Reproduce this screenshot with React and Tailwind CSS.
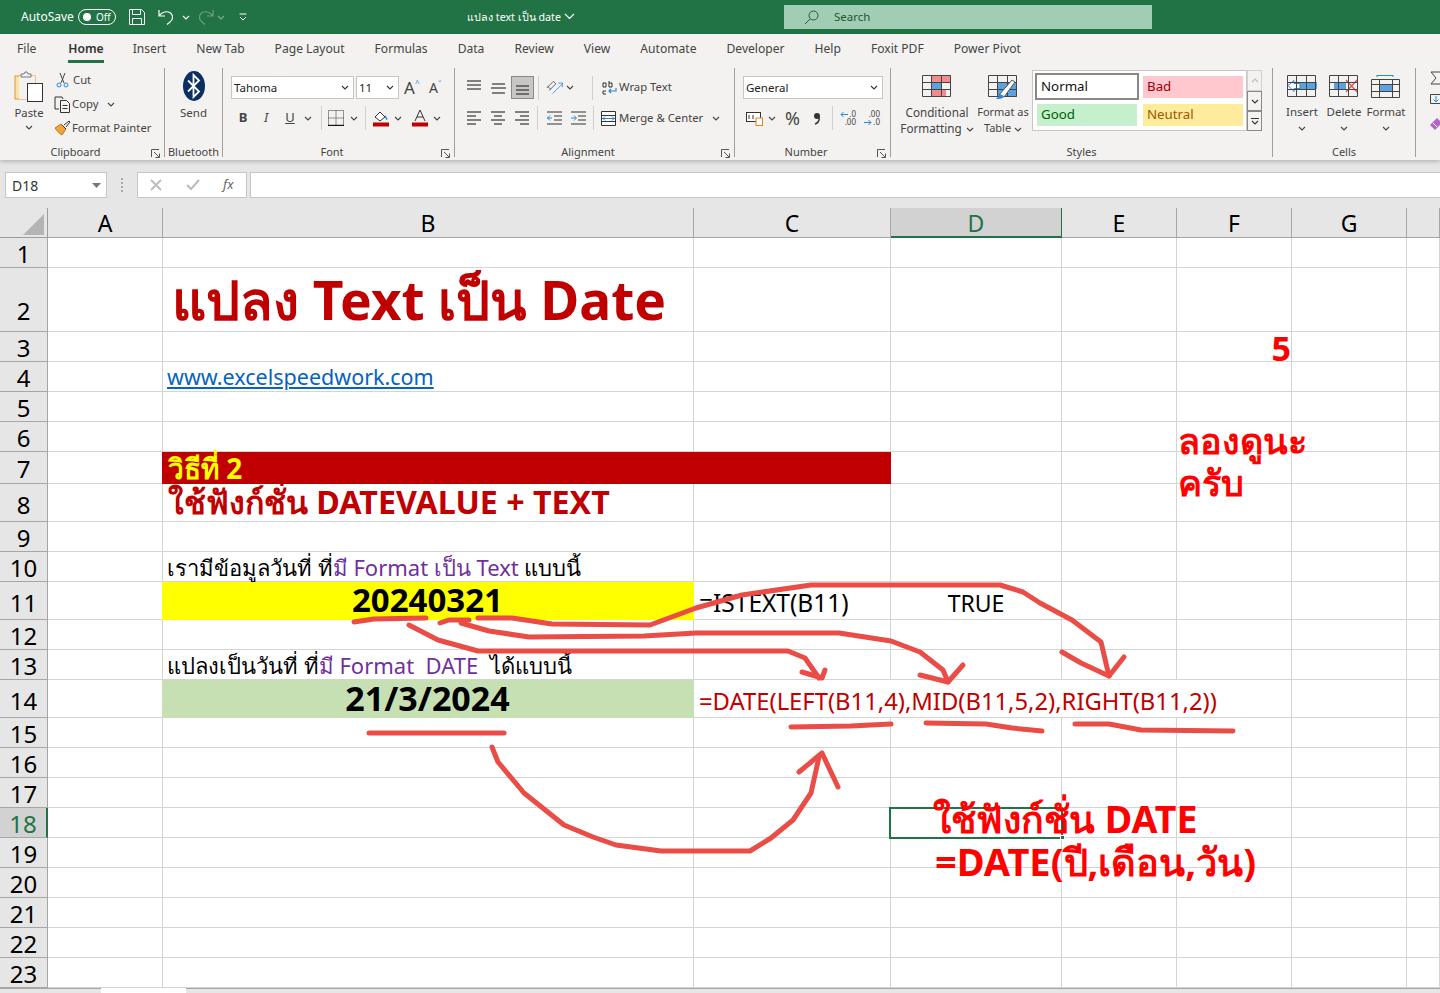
import React from "react";

const Chev = ({ className = "", color = "#444" }) => (
  <svg width="8" height="5" viewBox="0 0 8 5" className={`shrink-0 ${className}`}>
    <path d="M1 1l3 3 3-3" fill="none" stroke={color} strokeWidth="1.1" />
  </svg>
);

const Launcher = () => (
  <svg width="9" height="9" viewBox="0 0 9 9" className="mr-[4px] shrink-0 mt-[2px]">
    <path d="M.5 8V.5H8M3 3l5 5M4.5 8.500h4v-4" fill="none" stroke="#555" strokeWidth="1" />
  </svg>
);

const Sep = ({ className = "" }) => <div className={`w-px h-[24px] bg-[#d2d0ce] ${className}`} />;

// little lines icons for the alignment buttons
const Lines = ({ ys, widths }) => (
  <svg width="15" height="18" viewBox="0 0 15 18">
    {ys.map((y, i) => (
      <line key={i} x1={widths[i][0]} x2={widths[i][1]} y1={y} y2={y} stroke="#333" strokeWidth="1.2" />
    ))}
  </svg>
);

const Group = ({ className, label, launcher, children }) => (
  <div className={`h-full flex flex-col shrink-0 border-r border-[#a19f9d] ${className}`}>
    <div className="flex-1 min-h-0">{children}</div>
    <div className="h-[14px] flex items-center text-[11px] leading-[14px] text-[#444] translate-y-[2px]">
      <div className="flex-1 text-center">{label}</div>
      {launcher && <Launcher />}
    </div>
  </div>
);

const Combo = ({ className, text }) => (
  <div className={`h-[23px] bg-white border border-[#c8c6c4] flex items-center justify-between pl-[2px] pr-[4px] text-[11.500px] text-[#222] ${className}`}>
    <span>{text}</span>
    <Chev color="#333" />
  </div>
);

const TitleBar = () => (
  <div className="h-[34px] bg-[#217346] flex items-center text-white text-[12px] shrink-0">
    <span className="ml-[21px] w-[57px]">AutoSave</span>
    <div className="w-[38px] h-[16px] rounded-full border border-white flex items-center pl-[4px] gap-[5px]">
      <div className="w-[8px] h-[8px] rounded-full bg-white" />
      <span className="text-[10px] leading-none">Off</span>
    </div>
    <svg width="16" height="16" viewBox="0 0 16 16" className="ml-[13px]">
      <path d="M.5.5h12l3 3v12H.5zM3.500.5v5h8v-5M3.500 15.500v-6h9v6" fill="none" stroke="#fff" />
    </svg>
    <svg width="16" height="16" viewBox="0 0 16 16" className="ml-[13px]">
      <path d="M1 1v6h6M1.500 6.500C4 3 9 1.500 12.500 4c3 2.500 2.500 7-.5 9l-3 2.500" fill="none" stroke="#fff" strokeWidth="1.2" />
    </svg>
    <Chev color="#fff" className="ml-[8px]" />
    <svg width="16" height="16" viewBox="0 0 16 16" className="ml-[8px] opacity-40">
      <path d="M15 1v6H9M14.500 6.500C12 3 7 1.500 3.500 4c-3 2.500-2.500 7 .5 9l3 2.500" fill="none" stroke="#cfe3d7" strokeWidth="1.2" />
    </svg>
    <Chev color="#7fae93" className="ml-[3px]" />
    <svg width="8" height="8" viewBox="0 0 8 8" className="ml-[14px]">
      <path d="M.5 1h7M1 4l3 3 3-3" fill="none" stroke="#fff" />
    </svg>
    <div className="ml-[220px] w-[110px] flex items-center gap-[3px] text-[10.700px] whitespace-nowrap">
      <span>แปลง text เป็น date</span>
      <svg width="11" height="7" viewBox="0 0 11 7" className="shrink-0">
        <path d="M1 1l4.500 4.500L10 1" fill="none" stroke="#fff" strokeWidth="1.200" />
      </svg>
    </div>
    <div className="ml-[207px] w-[368px] h-[24px] bg-[#a0cdb3] flex items-center pl-[20px] text-[#1d5a38]">
      <svg width="15" height="15" viewBox="0 0 15 15">
        <circle cx="9.500" cy="5.500" r="4.500" fill="none" stroke="#1d5a38" />
        <path d="M6 9l-5 5" stroke="#1d5a38" />
      </svg>
      <span className="ml-[15px] text-[11.500px]">Search</span>
    </div>
  </div>
);

const tabs = ["Insert", "New Tab", "Page Layout", "Formulas", "Data", "Review", "View", "Automate", "Developer", "Help", "Foxit PDF", "Power Pivot"];

const TabRow = () => (
  <div className="h-[30px] flex items-center gap-[30px] pl-[17px] text-[12.100px] text-[#444] shrink-0 whitespace-nowrap">
    <span className="mr-[2px]">File</span>
    <span className="relative font-semibold text-[#333] -mr-[1px]">
      Home
      <span className="absolute left-0 right-0 -bottom-[5px] h-[3px] bg-[#217346]" />
    </span>
    {tabs.map((t) => (
      <span key={t}>{t}</span>
    ))}
  </div>
);

const Clipboard = () => (
  <Group className="w-[165px]" label="Clipboard" launcher>
    <div className="flex pl-[8px] text-[11.300px] text-[#444]">
      <div className="w-[42px] flex flex-col items-center pt-[3px]">
        <svg width="30" height="32" viewBox="0 0 30 32">
          <rect x="1" y="5" width="20" height="23" fill="#fbe3a6" stroke="#e8912d" />
          <rect x="5" y="5" width="16" height="23" fill="#f3f2f1" />
          <path d="M7 6V3h3l1-2h2l1 2h3v3z" fill="#f3f2f1" stroke="#777" />
          <rect x="13.500" y="12.500" width="15" height="18" fill="#fff" stroke="#333" />
        </svg>
        <span className="mt-[2px] leading-[16px]">Paste</span>
        <Chev className="mt-[4px]" />
      </div>
      <div className="ml-[4px] flex flex-col">
        <div className="h-[24px] flex items-center">
          <svg width="16" height="16" viewBox="0 0 16 16" className="mr-[2px] ml-[1px]">
            <path d="M5 1l4 10M10 1L6 11" stroke="#444" fill="none" />
            <circle cx="4" cy="13" r="2" fill="none" stroke="#2b88d8" />
            <circle cx="11" cy="13" r="2" fill="none" stroke="#2b88d8" />
          </svg>
          Cut
        </div>
        <div className="h-[24px] flex items-center">
          <svg width="17" height="17" viewBox="0 0 17 17" className="mr-[1px]">
            <path d="M5 13H1V1h7l1 2M6.500 4.500h6l3 3v9h-9zM8.500 9.500h5M8.500 12.500h5" fill="none" stroke="#333" />
          </svg>
          Copy
          <Chev className="ml-[9px]" />
        </div>
        <div className="h-[24px] flex items-center whitespace-nowrap">
          <svg width="17" height="16" viewBox="0 0 17 16" className="mr-[1px]">
            <path d="M1 8l6-4 5 5-4 6c-2-1-5-4-7-7z" fill="#f2a33a" stroke="#c8701a" />
            <path d="M8 5l4 4M10 5l5-4 1 1-4 5" fill="none" stroke="#333" />
          </svg>
          Format Painter
        </div>
      </div>
    </div>
  </Group>
);

const BluetoothGroup = () => (
  <Group className="w-[58px]" label="Bluetooth">
    <div className="flex flex-col items-center pt-[3px] text-[11.500px] text-[#444]">
      <svg width="22" height="30" viewBox="0 0 22 30">
        <ellipse cx="11" cy="15" rx="11" ry="15" fill="#0b2e63" />
        <path d="M5 9.500l11 11-5.500 5.500V4l5.500 5.500-11 11" fill="none" stroke="#fff" strokeWidth="1.800" />
      </svg>
      <span className="mt-[4px] leading-[16px]">Send</span>
    </div>
  </Group>
);

const FontGroup = () => (
  <Group className="w-[232px]" label="Font" launcher>
    <div className="pl-[8px] pt-[8px]">
      <div className="flex items-center">
        <Combo className="w-[123px]" text="Tahoma" />
        <Combo className="w-[43px] ml-[2px] text-[#5c2d91]" text="11" />
        <div className="ml-[5px] w-[18px] flex items-start text-[#444] text-[17px] leading-none">
          A<span className="text-[#2b88d8] text-[8px] leading-none">^</span>
        </div>
        <div className="ml-[7px] w-[18px] flex items-start text-[#444] text-[14px] leading-none">
          A<span className="text-[#2b88d8] text-[8px] leading-none">ˇ</span>
        </div>
      </div>
      <div className="mt-[8px] h-[22px] flex items-center text-[13px] text-[#444]">
        <span className="w-[22px] text-center font-bold ml-[1px]">B</span>
        <span className="w-[24px] text-center italic font-['Liberation_Serif',serif]">I</span>
        <span className="w-[24px] text-center underline">U</span>
        <Chev className="ml-[2px]" />
        <Sep className="ml-[9px]" />
        <svg width="16" height="16" viewBox="0 0 16 16" className="ml-[6px]">
          <path d="M.5.5h15v15H.5zM8 .5v15M.5 8h15" fill="none" stroke="#333" strokeDasharray="1 1" />
          <path d="M0 15.500h16" stroke="#111" strokeWidth="1.400" />
        </svg>
        <Chev className="ml-[6px]" />
        <Sep className="ml-[7px]" />
        <svg width="16" height="18" viewBox="0 0 16 18" className="ml-[7px]">
          <path d="M2 8l5-5 5 5-5 4z" fill="#fff" stroke="#333" />
          <path d="M12 6c2 2 3 4 2 5-1 0-2-2-2-5z" fill="#2b88d8" />
          <rect y="13.500" width="16" height="4" fill="#c00000" />
        </svg>
        <Chev className="ml-[5px]" />
        <svg width="16" height="18" viewBox="0 0 16 18" className="ml-[10px]">
          <path d="M3 12L8 1l5 11M5 8h6" fill="none" stroke="#333" />
          <rect y="13.500" width="16" height="4" fill="#c00000" />
        </svg>
        <Chev className="ml-[5px]" />
      </div>
    </div>
  </Group>
);

const AlignmentGroup = () => (
  <Group className="w-[280px]" label="Alignment" launcher>
    <div className="pl-[12px] pt-[8px] text-[11.300px] text-[#444]">
      <div className="h-[23px] flex items-center">
        <Lines ys={[2, 6, 10]} widths={[[0, 14], [0, 14], [0, 14]]} />
        <div className="ml-[9px]"><Lines ys={[5, 9, 14]} widths={[[1, 14], [0, 15], [1, 14]]} /></div>
        <div className="ml-[5px] w-[23px] h-[23px] bg-[#c8c6c4] border border-[#8a8886] flex items-center justify-center">
          <Lines ys={[7, 11, 15]} widths={[[1, 14], [1, 14], [1, 14]]} />
        </div>
        <Sep className="ml-[4px]" />
        <svg width="18" height="15" viewBox="0 0 22 17" className="ml-[7px]">
          <path d="M8 16l12-12M15 3h5v5" fill="none" stroke="#2b88d8" />
          <path d="M1 9l8-8 3 3-8 8M2 7l4 4" fill="none" stroke="#444" />
        </svg>
        <Chev className="ml-[2px]" />
        <Sep className="ml-[18px]" />
        <svg width="15" height="16" viewBox="0 0 15 16" className="ml-[9px] mr-[2px] shrink-0">
          <path d="M1 3h3v4H1zM7 1v6h3V3H7M1 11h3M1 11v3h3" fill="none" stroke="#333" />
          <path d="M14 8v3H7M9 9l-2 2 2 2" fill="none" stroke="#2b88d8" strokeWidth="1.200" />
        </svg>
        <span>Wrap Text</span>
      </div>
      <div className="mt-[8px] h-[22px] flex items-center">
        <Lines ys={[3, 7, 11, 15]} widths={[[0, 14], [0, 9], [0, 14], [0, 9]]} />
        <div className="ml-[9px]"><Lines ys={[3, 7, 11, 15]} widths={[[0, 14], [3, 11], [0, 14], [3, 11]]} /></div>
        <div className="ml-[9px]"><Lines ys={[3, 7, 11, 15]} widths={[[0, 14], [5, 14], [0, 14], [5, 14]]} /></div>
        <Sep className="ml-[7px]" />
        <svg width="15" height="14" viewBox="0 0 15 14" className="ml-[9px]">
          <path d="M0 1h15M7 5h8M7 9h8M0 13h15" stroke="#333" />
          <path d="M5 7H0M3 4.500L.5 7 3 9.500" fill="none" stroke="#2b88d8" />
        </svg>
        <svg width="15" height="14" viewBox="0 0 15 14" className="ml-[9px]">
          <path d="M0 1h15M7 5h8M7 9h8M0 13h15" stroke="#333" />
          <path d="M0 7h5M3 4.500L5.500 7 3 9.500" fill="none" stroke="#2b88d8" />
        </svg>
        <Sep className="ml-[7px]" />
        <svg width="15" height="15" viewBox="0 0 15 15" className="ml-[7px]">
          <path d="M.5.5h14v14H.5zM.5 4.500h14M.5 10.500h14" fill="#fff" stroke="#333" />
          <path d="M1 7.500h13M4 5.500L2 7.500l2 2M11 5.500l2 2-2 2" fill="none" stroke="#2b88d8" />
        </svg>
        <span className="ml-[3px]">Merge &amp; Center</span>
        <Chev className="ml-[9px]" />
      </div>
    </div>
  </Group>
);

const ArrowL = () => (
  <svg width="8" height="7" viewBox="0 0 8 7">
    <path d="M8 3.500H1M3.500 1L1 3.500 3.500 6" fill="none" stroke="#2b88d8" />
  </svg>
);

const ArrowR = () => (
  <svg width="8" height="7" viewBox="0 0 8 7">
    <path d="M0 3.500h7M4.500 1L7 3.500 4.500 6" fill="none" stroke="#2b88d8" />
  </svg>
);

const NumberGroup = () => (
  <Group className="w-[156px]" label="Number" launcher>
    <div className="pl-[8px] pt-[8px] text-[#444]">
      <Combo className="w-[140px]" text="General" />
      <div className="mt-[8px] h-[22px] flex items-center">
        <svg width="17" height="15" viewBox="0 0 17 15" className="ml-[3px]">
          <rect x=".5" y="1.500" width="14" height="9" fill="#fff" stroke="#333" />
          <rect x="10" y="7" width="6.500" height="7.500" fill="#fff" stroke="#e8821a" />
          <path d="M3 4v4M7 4v4" stroke="#333" />
        </svg>
        <Chev className="ml-[5px]" />
        <span className="ml-[9px] w-[16px] text-[18px] leading-none">%</span>
        <svg width="8" height="13" viewBox="0 0 8 13" className="ml-[12px]">
          <circle cx="4" cy="4" r="3" fill="#333" />
          <path d="M6 5c1 3-1 6-4 7" fill="none" stroke="#333" strokeWidth="1.500" />
        </svg>
        <Sep className="ml-[11px]" />
        <div className="ml-[7px] w-[16px] flex flex-col text-[8px] leading-[8px]">
          <div className="flex items-center justify-between"><ArrowL /><span>.0</span></div>
          <div className="text-right">.00</div>
        </div>
        <div className="ml-[8px] w-[16px] flex flex-col text-[8px] leading-[8px]">
          <div className="text-right">.00</div>
          <div className="flex items-center justify-between"><ArrowR /><span>.0</span></div>
        </div>
      </div>
    </div>
  </Group>
);

const SmallGrid = ({ children }) => (
  <svg width="30" height="24" viewBox="0 0 30 24">
    {children}
    <path d="M.5.500h28v21H.5zM.5 7.500h28M.5 14.500h28M9.500.500v21M19.500.500v21" fill="none" stroke="#444" />
  </svg>
);

const styleCell = "w-[100px] h-[22px] flex items-center pl-[4px] pb-[2px] text-[13.300px]";

const StylesGroup = () => (
  <Group className="w-[382px]" label="Styles">
    <div className="flex pl-[8px] text-[11.700px] leading-[16px] text-[#444]">
      <div className="w-[76px] flex flex-col items-center pt-[7px]">
        <SmallGrid>
          <rect x="10" y="0" width="19" height="7" fill="#f28b8d" />
          <rect x="10" y="7" width="9" height="7" fill="#5ba3e0" />
          <rect x="10" y="14" width="14" height="7" fill="#f28b8d" />
        </SmallGrid>
        <span className="mt-[5px]">Conditional</span>
        <span className="whitespace-nowrap">Formatting <Chev className="inline ml-[1px]" /></span>
      </div>
      <div className="w-[58px] -ml-[1px] flex flex-col items-center pt-[7px]">
        <div className="relative">
          <SmallGrid>
            <rect x="10" y="7" width="19" height="15" fill="#5ba3e0" />
          </SmallGrid>
          <svg width="22" height="22" viewBox="0 0 22 22" className="absolute left-[8px] top-[3px]">
            <path d="M3 17L16 2l3 2-11 15z" fill="#fff" stroke="#555" />
            <path d="M0 21c3 0 7 0 8-3l-4-2c-1 3-2 3-4 5z" fill="#2b88d8" />
          </svg>
        </div>
        <span className="mt-[5px] whitespace-nowrap text-[11px]">Format as</span>
        <span className="whitespace-nowrap text-[11px]">Table <Chev className="inline" /></span>
      </div>
      <div className="flex mt-[2px]">
        <div className="w-[215px] h-[61px] bg-white border border-[#c8c6c4] grid grid-cols-[108px_100px] content-start pl-[2px] pt-[2px]">
          <div className="w-[104px] h-[27px] border-2 border-[#8a8886] bg-white flex items-center pl-[4px] pb-[2px] text-[13.300px] text-[#111]">Normal</div>
          <div className={`${styleCell} mt-[3px] bg-[#ffc7ce] text-[#9c0006]`}>Bad</div>
          <div className={`${styleCell} mt-[4px] ml-[2px] bg-[#c6efce] text-[#006100]`}>Good</div>
          <div className={`${styleCell} mt-[4px] bg-[#ffeb9c] text-[#9c5700]`}>Neutral</div>
        </div>
        <div className="w-[15px] flex flex-col">
          <div className="h-[21px] border border-[#d2d0ce] flex items-center justify-center">
            <Chev className="rotate-180" color="#bbb" />
          </div>
          <div className="h-[20px] border border-[#8a8886] flex items-center justify-center">
            <Chev color="#333" />
          </div>
          <div className="h-[20px] border border-[#8a8886] flex flex-col items-center justify-center gap-[1px]">
            <div className="w-[8px] h-px bg-[#333]" />
            <Chev color="#333" />
          </div>
        </div>
      </div>
    </div>
  </Group>
);

const CellBtn = ({ label, children }) => (
  <div className="w-[42px] flex flex-col items-center pt-[7px]">
    <div className="h-[24px]">{children}</div>
    <span className="mt-[5px] leading-[16px]">{label}</span>
    <Chev className="mt-[6px]" />
  </div>
);

const CellsGroup = () => (
  <Group className="w-[143px]" label="Cells">
    <div className="flex pl-[8px] text-[11.500px] text-[#444]">
      <CellBtn label="Insert">
        <SmallGrid>
          <rect x="12" y="7" width="18" height="7" fill="#5ba3e0" />
          <path d="M1 10.500l6-5v3h6v5H7v3z" fill="#fff" stroke="#2b88d8" />
        </SmallGrid>
      </CellBtn>
      <CellBtn label="Delete">
        <SmallGrid>
          <rect x="5" y="7" width="12" height="7" fill="#5ba3e0" />
          <path d="M17 5l11 12M28 5L17 17" stroke="#e8504f" strokeWidth="1.300" />
        </SmallGrid>
      </CellBtn>
      <CellBtn label="Format">
        <svg width="30" height="24" viewBox="0 0 30 24">
          <path d="M6 .500h16M6 0v2M22 0v2" stroke="#2b88d8" />
          <rect x="9" y="9" width="12" height="7" fill="#5ba3e0" />
          <path d="M.5 4.500h28v18H.5zM.5 9.500h28M.5 16.500h28M8.500 4.500v18M21.500 4.500v18" fill="none" stroke="#444" />
        </svg>
      </CellBtn>
    </div>
  </Group>
);

const EditingGroup = () => (
  <div className="pl-[14px] pt-[3px] flex flex-col gap-[9px]">
    <svg width="12" height="14" viewBox="0 0 12 14">
      <path d="M11 1H1l5 6-5 6h10" fill="none" stroke="#444" />
    </svg>
    <svg width="12" height="13" viewBox="0 0 12 13">
      <path d="M12 .5H.5v9H12" fill="none" stroke="#444" />
      <path d="M6 2v6M3.500 5.500L6 8l2.500-2.500" fill="none" stroke="#2b88d8" />
    </svg>
    <svg width="12" height="14" viewBox="0 0 12 14">
      <path d="M0 9l7-7 5 5-7 7z" fill="#b565c8" />
      <path d="M3 7l4 4" stroke="#fff" />
    </svg>
  </div>
);

const FormulaBar = () => (
  <div className="h-[48px] bg-[#e6e6e6] flex items-start pt-[12px] shrink-0 text-[14px]">
    <div className="ml-[5px] w-[102px] h-[26px] bg-white border border-[#c8c6c4] flex items-center justify-between pl-[6px] pr-[5px] text-[#333]">
      D18
      <svg width="9" height="5" viewBox="0 0 9 5"><path d="M0 0h9L4.500 5z" fill="#777" /></svg>
    </div>
    <div className="ml-[14px] w-[2px] h-[14px] mt-[6px] border-l-2 border-dotted border-[#aaa]" />
    <div className="ml-[14px] w-[110px] h-[26px] bg-white border border-[#c8c6c4] flex items-center">
      <svg width="12" height="12" viewBox="0 0 12 12" className="ml-[12px]">
        <path d="M1 1l10 10M11 1L1 11" stroke="#bbb" strokeWidth="1.800" />
      </svg>
      <svg width="14" height="12" viewBox="0 0 14 12" className="ml-[24px]">
        <path d="M1 6l4 4 8-9" fill="none" stroke="#bbb" strokeWidth="2" />
      </svg>
      <span className="ml-[23px] text-[13px] italic text-[#666] font-['Liberation_Serif',serif]">fx</span>
    </div>
    <div className="ml-[3px] flex-1 h-[26px] bg-white border-y border-l border-[#c8c6c4]" />
  </div>
);

const cols = ["A", "B", "C", "D", "E", "F", "G", "H"];
const rowHeights = ["h-[30px]", "h-[64px]", "h-[30px]", "h-[30px]", "h-[30px]", "h-[30px]", "h-[32px]", "h-[38px]", "h-[30px]", "h-[30px]", "h-[38px]", "h-[30px]", "h-[30px]", "h-[38px]", "h-[30px]", "h-[30px]", "h-[30px]", "h-[30px]", "h-[30px]", "h-[30px]", "h-[30px]", "h-[30px]", "h-[30px]"];

const purple = "text-[#7030a0]";
const headFont = "font-['DejaVu_Sans',sans-serif]";

// only the cells that hold something, the rest of the sheet is empty
const cells = {
  "B2": { className: `text-[#c00000] font-bold text-[53.300px] leading-[60px] pl-[9px] pb-[1px] ${headFont}`, text: "แปลง Text เป็น Date" },
  "F3": { className: `justify-end text-[#ff0000] font-bold text-[34px] leading-[26px] ${headFont}`, text: "5" },
  "B4": { className: "text-[#0563c1] underline text-[21.500px] leading-[28px] pl-[4px]", text: "www.excelspeedwork.com" },
  "B7": { skip: ["C"], span: "col-span-2 -ml-px", fill: "bg-[#c00000] border-[#c00000]", className: "text-[#ffff00] font-bold text-[28px] leading-[30px] pl-[6px]", text: "วิธีที่ 2" },
  "B8": { className: `text-[#c00000] font-bold text-[32.200px] leading-[38px] pl-[5px] ${headFont}`, text: "ใช้ฟังก์ชั่น DATEVALUE + TEXT" },
  "B10": {
    className: "text-[22px] leading-[28px] pl-[4px] text-black",
    text: <>เรามีข้อมูลวันที่ ที่<span className={purple}>มี Format เป็น Text</span><span className="ml-[5px]">แบบนี้</span></>,
  },
  "B11": { span: "-ml-px", fill: "bg-[#ffff00] border-[#ffff00]", className: `justify-center font-bold text-[33px] leading-[38px] text-black ${headFont}`, text: "20240321" },
  "C11": { className: "text-[24.500px] leading-[32px] pl-[5px] text-black", text: "=ISTEXT(B11)" },
  "D11": { className: "justify-center text-[23px] leading-[32px] text-black", text: "TRUE" },
  "B13": {
    className: "text-[22px] leading-[28px] pl-[4px] text-black",
    text: <>แปลงเป็นวันที่ ที่<span className={purple}>มี Format &nbsp;DATE</span>&nbsp; ได้แบบนี้</>,
  },
  "B14": { span: "-ml-px", fill: "bg-[#c6e0b4] border-[#c6e0b4]", className: `justify-center font-bold text-[34px] leading-[38px] text-black ${headFont}`, text: "21/3/2024" },
  "C14": { span: "col-span-4", skip: ["D", "E", "F"], className: "text-[23.800px] leading-[32px] pl-[5px] text-[#c00000]", text: "=DATE(LEFT(B11,4),MID(B11,5,2),RIGHT(B11,2))" },
};

const Sheet = () => (
  <div className="grid grid-cols-[48px_115px_531px_197px_171px_115px_115px_115px_1fr] auto-rows-min font-['Noto_Sans',sans-serif] text-black shrink-0">
    <div className="h-[30px] bg-[#e6e6e6] border-r border-b border-[#9c9c9c] flex items-end justify-end pr-[3px] pb-[2px]">
      <div className="w-0 h-0 border-l-[21px] border-l-transparent border-b-[21px] border-b-[#b4b4b4]" />
    </div>
    {cols.map((c) => (
      <div
        key={c}
        className={
          c === "D"
            ? "h-[30px] pt-[2px] bg-[#d2d2d2] text-[#217346] border-r border-b-2 border-[#217346] flex items-center justify-center text-[23px]"
            : "h-[30px] pt-[2px] bg-[#e6e6e6] border-r border-b border-[#a6a6a6] flex items-center justify-center text-[23px]"
        }
      >
        {c !== "H" && c}
      </div>
    ))}
    {rowHeights.map((h, i) => {
      const row = i + 1;
      const skipped = cols.flatMap((k) => cells[k + row]?.skip || []);
      const nudge = row === 2 ? "pt-[22px]" : h === "h-[38px]" ? "pt-[4px]" : "pt-[2px]";
      return (
        <React.Fragment key={row}>
          <div
            className={`${h} ${nudge} border-b flex items-center justify-center text-[24px] leading-[28px] ${
              row === 18
                ? "bg-[#d2d2d2] text-[#217346] border-r-2 border-r-[#217346] border-b-[#a6a6a6]"
                : "bg-[#e6e6e6] border-r border-[#a6a6a6]"
            }`}
          >
            {row}
          </div>
          {cols.filter((c) => !skipped.includes(c)).map((c) => {
            const cell = cells[c + row];
            return (
              <div
                key={c}
                className={`${h} border-r border-b flex items-end whitespace-nowrap min-w-0 ${cell?.span || ""} ${cell?.fill || "bg-white border-[#d4d4d4]"} ${cell?.className || ""}`}
              >
                {cell?.text}
              </div>
            );
          })}
        </React.Fragment>
      );
    })}
  </div>
);

const strokes = [
  "354,622 374,619 426,618",
  "440,623 449,620 469,620",
  "478,618 512,618 552,624 650,625 696,608 742,595 811,585 1000,585 1023,592 1040,603 1072,620 1101,642 1109,676",
  "1062,652 1081,663 1109,676 1124,657",
  "461,623 489,631 529,637 644,636 696,633 839,633 891,641 920,652 943,670 948,682",
  "920,675 948,682 963,665",
  "409,625 438,640 478,651 788,651 805,658 819,678",
  "802,672 822,678 825,670",
  "369,733 504,733",
  "791,727 851,726 891,724",
  "926,723 986,724 1012,728 1042,731",
  "1075,724 1109,724 1141,730 1233,731",
  "492,747 498,762 524,793 564,825 593,837 616,845 661,851 750,851 771,838 793,820 811,793 819,757",
  "799,772 822,753 838,787",
];

const floatText = "absolute whitespace-nowrap font-bold text-[#ff0000] font-['DejaVu_Sans',sans-serif]";

const App = () => (
  <div className="relative w-[1440px] h-[993px] overflow-hidden bg-[#e6e6e6] flex flex-col font-['Noto_Sans',sans-serif]">
    <TitleBar />
    <div className="h-[126px] bg-[#f3f2f1] flex flex-col shrink-0 shadow-[0_2px_4px_rgba(0,0,0,0.2)] z-10">
      <TabRow />
      <div className="h-[89px] mt-[4px] flex">
        <Clipboard />
        <BluetoothGroup />
        <FontGroup />
        <AlignmentGroup />
        <NumberGroup />
        <StylesGroup />
        <CellsGroup />
        <EditingGroup />
      </div>
    </div>
    <FormulaBar />
    <Sheet />
    <div className="flex-1 flex bg-[#e6e6e6]">
      <div className="w-[101px] border-t border-[#a6a6a6]" />
      <div className="w-[85px] bg-white" />
      <div className="flex-1 border-t border-[#a6a6a6]" />
    </div>

    {/* selected cell, drawn marks and text boxes sit over the sheet */}
    <div className="absolute left-[889px] top-[807px] w-[174px] h-[32px] border-2 border-[#217346]" />
    <div className="absolute left-[1060px] top-[835px] w-[5px] h-[5px] bg-[#217346] border border-white" />
    <svg viewBox="0 0 1440 993" className="absolute inset-0 w-[1440px] h-[993px] pointer-events-none">
      {strokes.map((p, i) => (
        <polyline key={i} points={p} fill="none" stroke="#ea4c46" strokeWidth="5" strokeLinecap="round" strokeLinejoin="round" />
      ))}
    </svg>
    <div className={`${floatText} left-[1178px] top-[420px] text-[36px] leading-[42px]`}>
      ลองดูนะ<br />ครับ
    </div>
    <div className={`${floatText} left-[933px] top-[797px] text-[37.500px] leading-[43px]`}>
      ใช้ฟังก์ชั่น DATE<br />
      <span className="ml-[2px] text-[38px] leading-[42px]">=DATE(ปี,เดือน,วัน)</span>
    </div>
  </div>
);

export default App;
